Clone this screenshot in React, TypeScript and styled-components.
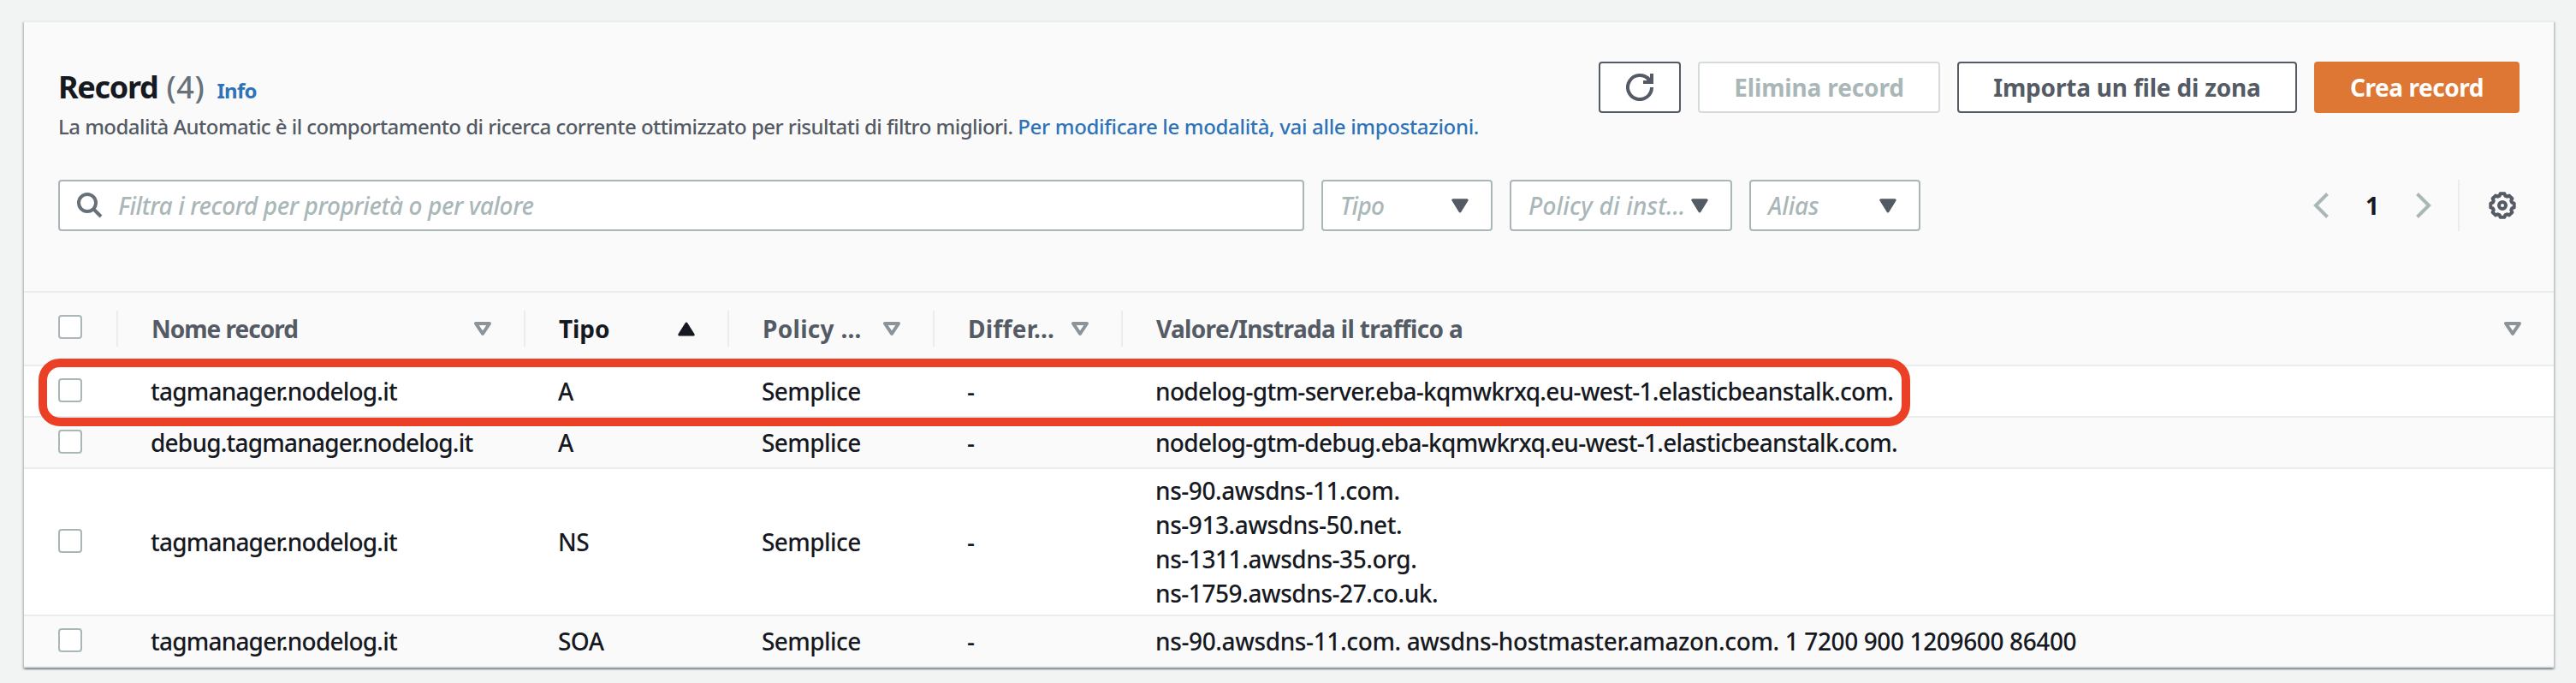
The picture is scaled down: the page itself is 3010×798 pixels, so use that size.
import React from "react";
import styled, { createGlobalStyle, css } from "styled-components";

const color = {
  page: "#f2f4f4",
  panel: "#fafafa",
  line: "#eaeded",
  ink: "#16191f",
  slate: "#545b64",
  muted: "#687078",
  disabled: "#aab7b8",
  link: "#2e73b8",
  accent: "#dd7733",
  highlight: "#eb4026",
};

const GlobalStyle = createGlobalStyle`
  *, *::before, *::after { box-sizing: border-box; }
  body {
    margin: 0;
    background: ${color.page};
    color: ${color.ink};
    font-family: "Noto Sans", "Open Sans", sans-serif;
    font-size: 28px;
    font-weight: 460;
    line-height: 40px;
  }
`;

const Page = styled.main`
  height: 798px;
  padding: 24px 26px 0 28px;
  background: ${color.page};
  overflow: hidden;
`;

const Card = styled.section`
  height: 756px;
  border-top: 2px solid ${color.line};
  background: ${color.panel};
  box-shadow:
    0 2px 2px 0 rgba(0, 28, 36, 0.3),
    2px 2px 2px 0 rgba(0, 28, 36, 0.15),
    -2px 2px 2px 0 rgba(0, 28, 36, 0.15);
`;

const CardHeader = styled.header`
  display: flex;
  justify-content: space-between;
  height: 184px;
  padding: 46px 40px 0;
`;

const Heading = styled.div`
  padding-top: 8px;
  white-space: nowrap;
`;

const TitleLine = styled.div`
  display: flex;
  align-items: baseline;
  height: 50px;
  line-height: 44px;
`;

const Title = styled.h2`
  margin: 0;
  font-size: 36px;
  font-weight: 700;
  letter-spacing: -1.3px;
`;

const Counter = styled.span`
  margin-left: 10px;
  color: ${color.muted};
  font-size: 36px;
  letter-spacing: 0.6px;
`;

const InfoLink = styled.a`
  margin-left: 14px;
  color: ${color.link};
  font-size: 24px;
  font-weight: 700;
  letter-spacing: -0.7px;
`;

const Description = styled.p`
  margin: 0;
  color: ${color.slate};
  font-size: 24px;
  line-height: 36px;
  letter-spacing: -0.54px;
`;

const DescriptionLink = styled.a`
  color: ${color.link};
  letter-spacing: -0.32px;
`;

const Actions = styled.div`
  display: flex;
  gap: 20px;
`;

type Variant = "normal" | "disabled" | "primary";

const Button = styled.button<{ $variant?: Variant; $width: number; $track?: number }>`
  display: flex;
  align-items: center;
  justify-content: center;
  width: ${(p) => p.$width}px;
  height: 60px;
  padding: 0;
  border: 2px solid ${color.slate};
  border-radius: 4px;
  background: #fff;
  color: ${color.slate};
  font: inherit;
  font-weight: 700;
  letter-spacing: ${(p) => p.$track ?? 0}px;
  white-space: nowrap;
  ${(p) =>
    p.$variant === "disabled" &&
    css`
      border-color: #d5dbdb;
      color: ${color.disabled};
    `}
  ${(p) =>
    p.$variant === "primary" &&
    css`
      border-color: ${color.accent};
      background: ${color.accent};
      color: #fff;
    `}
`;

const Toolbar = styled.div`
  display: flex;
  align-items: center;
  height: 60px;
  padding: 0 40px;
`;

const Filters = styled.div`
  display: flex;
  gap: 20px;
  flex: 1;
`;

const field = css`
  display: flex;
  align-items: center;
  height: 60px;
  border: 2px solid ${color.disabled};
  border-radius: 4px;
  background: #fff;
  color: ${color.disabled};
  font-style: italic;
  white-space: nowrap;
`;

const SearchField = styled.div`
  ${field}
  width: 1456px;
  padding-left: 20px;
  gap: 18px;
  letter-spacing: -0.41px;
`;

const Select = styled.div<{ $width: number; $track?: number }>`
  ${field}
  justify-content: space-between;
  width: ${(p) => p.$width}px;
  padding: 0 26px 0 20px;
  letter-spacing: ${(p) => p.$track ?? 0}px;
`;

const Pagination = styled.div`
  display: flex;
  align-items: center;
  width: 138px;
  justify-content: space-between;
  margin-right: 31px;
`;

const PageNumber = styled.span`
  font-weight: 700;
`;

const Preferences = styled.div`
  display: flex;
  align-items: center;
  height: 60px;
  padding: 0 4px 0 34px;
  border-left: 2px solid ${color.line};
`;

const Table = styled.div`
  margin-top: 70px;
  border-top: 2px solid ${color.line};
`;

const rowGrid = css`
  display: grid;
  grid-template-columns: 110px 476px 238px 240px 220px 1fr;
  align-items: center;
  border-bottom: 2px solid ${color.line};
`;

const HeaderRow = styled.div`
  ${rowGrid}
  height: 86px;
`;

const HeaderCell = styled.div<{ $active?: boolean; $track?: number }>`
  display: flex;
  align-items: center;
  justify-content: space-between;
  height: 42px;
  padding: 0 38px 0 39px;
  border-right: 2px solid ${color.line};
  color: ${(p) => (p.$active ? color.ink : color.slate)};
  font-weight: 700;
  letter-spacing: ${(p) => p.$track ?? 0}px;
  white-space: nowrap;
  &:last-child {
    border-right: 0;
  }
`;

const SelectAllCell = styled.div`
  height: 42px;
  padding: 5px 40px 0;
  border-right: 2px solid ${color.line};
`;

const Row = styled.div<{ $striped?: boolean }>`
  ${rowGrid}
  position: relative;
  padding: 5px 0;
  min-height: 60px;
  background: ${(p) => (p.$striped ? color.panel : "#fff")};
`;

const CheckCell = styled.div`
  padding: 0 40px 2px;
`;

const Cell = styled.div<{ $track?: number }>`
  padding-left: 38px;
  letter-spacing: ${(p) => p.$track ?? -0.58}px;
  white-space: nowrap;
`;

const Checkbox = styled.div`
  width: 28px;
  height: 28px;
  border: 2px solid ${color.disabled};
  border-radius: 4px;
  background: #fff;
`;

const Highlight = styled.div`
  position: absolute;
  z-index: 1;
  top: -9px;
  left: 17px;
  width: 2187px;
  height: 79px;
  border: 10px solid ${color.highlight};
  border-radius: 25px;
`;

const RefreshIcon = () => (
  <svg width="32" height="32" viewBox="0 0 32 32" fill="none" stroke={color.slate} strokeWidth="4">
    <path d="M30 16A14 14 0 1 1 26.5 6.8" />
    <path d="M20 10H30V0" />
    <path d="M24 4L30 10" />
  </svg>
);

const SearchIcon = () => (
  <svg width="30" height="30" viewBox="0 0 30 30" fill="none" stroke={color.muted} strokeWidth="4">
    <circle cx="12" cy="12" r="10" />
    <path d="M19 19L28 28" />
  </svg>
);

const SelectArrow = () => (
  <svg width="20" height="17" viewBox="0 0 20 17" fill={color.slate} stroke={color.slate} strokeWidth="3" strokeLinejoin="round">
    <path d="M1.8 1.8H18.2L10 15Z" />
  </svg>
);

const SortArrow = ({ ascending }: { ascending?: boolean }) =>
  ascending ? (
    <svg width="20" height="17" viewBox="0 0 20 17" fill={color.ink} stroke={color.ink} strokeWidth="3" strokeLinejoin="round">
      <path d="M1.8 15H18.2L10 2Z" />
    </svg>
  ) : (
    <svg width="20" height="16" viewBox="0 0 20 16" fill="#fff" stroke="#8d9499" strokeWidth="4" strokeLinejoin="round">
      <path d="M2 2H18L10 13.8Z" />
    </svg>
  );

const Chevron = ({ next }: { next?: boolean }) => (
  <svg width="18" height="30" viewBox="0 0 18 30" fill="none" stroke={color.disabled} strokeWidth="4">
    <path d={next ? "M1.5 1.5L15 15L1.5 28.5" : "M16.5 1.5L3 15L16.5 28.5"} />
  </svg>
);

const gearOutline = Array.from({ length: 8 }, (_, tooth) =>
  [
    [-10, 13.9],
    [10, 13.9],
    [17, 11.6],
    [28, 11.6],
  ]
    .map(([offset, radius]) => {
      const angle = ((tooth * 45 + offset) * Math.PI) / 180;
      return `${(16 + radius * Math.cos(angle)).toFixed(2)},${(16 + radius * Math.sin(angle)).toFixed(2)}`;
    })
    .join(" ")
).join(" ");

const GearIcon = () => (
  <svg width="32" height="32" viewBox="0 0 32 32" fill="none" stroke={color.slate} strokeWidth="4" strokeLinejoin="round">
    <polygon points={gearOutline} />
    <circle cx="16" cy="16" r="4" />
  </svg>
);

const columns = [
  { label: "Nome record", track: -1 },
  { label: "Tipo", track: -0.1, active: true },
  { label: "Policy …", track: 0.3 },
  { label: "Differ…", track: 0.3 },
  { label: "Valore/Instrada il traffico a", track: -0.66 },
];

const records = [
  {
    name: "tagmanager.nodelog.it",
    type: "A",
    values: ["nodelog-gtm-server.eba-kqmwkrxq.eu-west-1.elasticbeanstalk.com."],
    track: -0.67,
    highlighted: true,
  },
  {
    name: "debug.tagmanager.nodelog.it",
    type: "A",
    values: ["nodelog-gtm-debug.eba-kqmwkrxq.eu-west-1.elasticbeanstalk.com."],
    track: -0.7,
  },
  {
    name: "tagmanager.nodelog.it",
    type: "NS",
    values: ["ns-90.awsdns-11.com.", "ns-913.awsdns-50.net.", "ns-1311.awsdns-35.org.", "ns-1759.awsdns-27.co.uk."],
    track: -0.43,
  },
  {
    name: "tagmanager.nodelog.it",
    type: "SOA",
    values: ["ns-90.awsdns-11.com. awsdns-hostmaster.amazon.com. 1 7200 900 1209600 86400"],
    track: -0.37,
  },
];

export default function App() {
  return (
    <>
      <GlobalStyle />
      <Page>
        <Card>
          <CardHeader>
            <Heading>
              <TitleLine>
                <Title>Record</Title>
                <Counter>(4)</Counter>
                <InfoLink>Info</InfoLink>
              </TitleLine>
              <Description>
                La modalità Automatic è il comportamento di ricerca corrente ottimizzato per risultati di filtro
                migliori. <DescriptionLink>Per modificare le modalità, vai alle impostazioni.</DescriptionLink>
              </Description>
            </Heading>
            <Actions>
              <Button $width={96} aria-label="Aggiorna">
                <RefreshIcon />
              </Button>
              <Button $variant="disabled" $width={283} $track={-0.15}>
                Elimina record
              </Button>
              <Button $width={397} $track={-0.2}>
                Importa un file di zona
              </Button>
              <Button $variant="primary" $width={240} $track={-0.45}>
                Crea record
              </Button>
            </Actions>
          </CardHeader>

          <Toolbar>
            <Filters>
              <SearchField>
                <SearchIcon />
                Filtra i record per proprietà o per valore
              </SearchField>
              <Select $width={200} $track={-0.7}>
                Tipo
                <SelectArrow />
              </Select>
              <Select $width={260} $track={0.2}>
                Policy di inst…
                <SelectArrow />
              </Select>
              <Select $width={200} $track={-0.1}>
                Alias
                <SelectArrow />
              </Select>
            </Filters>
            <Pagination>
              <Chevron />
              <PageNumber>1</PageNumber>
              <Chevron next />
            </Pagination>
            <Preferences>
              <GearIcon />
            </Preferences>
          </Toolbar>

          <Table>
            <HeaderRow>
              <SelectAllCell>
                <Checkbox />
              </SelectAllCell>
              {columns.map((column) => (
                <HeaderCell key={column.label} $active={column.active} $track={column.track}>
                  {column.label}
                  <SortArrow ascending={column.active} />
                </HeaderCell>
              ))}
            </HeaderRow>
            {records.map((record, index) => (
              <Row key={index} $striped={index % 2 === 1}>
                <CheckCell>
                  <Checkbox />
                </CheckCell>
                <Cell $track={-0.8}>{record.name}</Cell>
                <Cell>{record.type}</Cell>
                <Cell>Semplice</Cell>
                <Cell>-</Cell>
                <Cell $track={record.track}>
                  {record.values.map((value) => (
                    <div key={value}>{value}</div>
                  ))}
                </Cell>
                {record.highlighted && <Highlight />}
              </Row>
            ))}
          </Table>
        </Card>
      </Page>
    </>
  );
}
